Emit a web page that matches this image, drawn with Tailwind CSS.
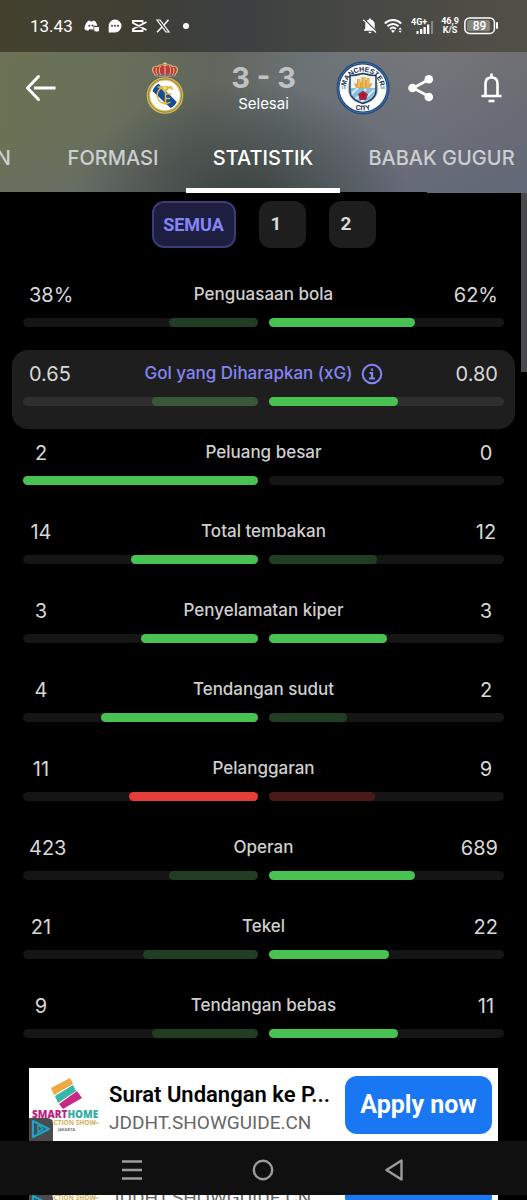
<!DOCTYPE html>
<html lang="id">
<head>
    <meta charset="UTF-8">
    <meta name="viewport" content="width=device-width, initial-scale=1.0">
    <title>Real Madrid 3 - 3 Manchester City - Statistik</title>
    <script src="https://cdn.jsdelivr.net/npm/@tailwindcss/browser@4"></script>
</head>
<body class="bg-black text-[#d8d8d8] font-['Inter',sans-serif] overflow-x-hidden">
    <header class="relative bg-[radial-gradient(ellipse_at_46%_104%,#3a423d_0%,#3a423d00_42%),linear-gradient(165deg,#62687800_45%,#626878_100%),linear-gradient(97deg,#6b7254_0%,#68705b_22%,#60665c_40%,#6c7376_58%,#76787b_80%,#737070_100%)]">
        <!-- Status bar -->
        <div class="flex justify-between items-center h-13 pl-[30px] pr-[28px] text-white bg-[linear-gradient(90deg,#44422e_0%,#3f3f34_25%,#3d4041_45%,#484944_70%,#515047_100%)]">
            <div class="flex items-center gap-[9px] font-['Roboto',sans-serif] text-[17px] leading-6">
                <span class="mr-[2px]">13.43</span>
                <svg class="w-[15px] h-[14px]" viewBox="0 0 15 14"><path fill="#fff" d="M4 2 6 1.500l.6 1h1.800L9 1.500l2 .5c1.300 1.500 2 3 2.300 4.800H9.500v4L5.500 10l-1.200 1.700C2.500 11.500 1.300 11 .5 10 .5 7 2 3.800 4 2Z"/><circle cx="5.300" cy="6.800" r="1" fill="#404034"/><circle cx="8.500" cy="6.500" r="1" fill="#404034"/><path fill="#fff" d="M10.300 8H15v4.200h-1.500l-1 1v-1h-2.200Z"/></svg>
                <svg class="w-[14px] h-[14px]" viewBox="0 0 14 14"><path fill="#fff" d="M7 .5A6.500 6.500 0 1 1 7 13.500H.7V7A6.400 6.400 0 0 1 7 .5Z"/><g fill="#404034"><circle cx="4" cy="6.800" r="1"/><circle cx="7" cy="6.800" r="1"/><circle cx="10" cy="6.800" r="1"/></g></svg>
                <svg class="w-[16px] h-[14px]" viewBox="0 0 16 14" fill="none" stroke="#fff" stroke-width="1.800"><path d="M15.500 3 2 10v2h9.500V10.300M11.500 3.700V2H2v2l13.500 7"/></svg>
                <svg class="w-[14px] h-[14px]" viewBox="0 0 14 14" fill="none" stroke="#fff"><path stroke-width="1.200" d="M1 1h3l9 12h-3Z"/><path stroke-width="1.400" d="M12.500.7 8 6M6 8l-5 5.300"/></svg>
                <span class="w-[6px] h-[6px] ml-[4px] rounded-full bg-white"></span>
            </div>
            <div class="flex items-center">
                <svg class="w-[14px] h-[16px]" viewBox="0 0 14 16"><path fill="#fff" d="M7 .5c.8 0 1.200.5 1.200 1.200C10.500 2.200 11.700 4 11.700 6.300V10.500L13 12v.8H1V12l1.300-1.500V6.300C2.300 4 3.500 2.200 5.800 1.700 5.800 1 6.200.5 7 .5ZM5.500 13.700h3a1.500 1.500 0 0 1-3 0Z"/><path stroke="#454643" stroke-width="1.300" d="M1.200 1.200 13.500 13.500"/><path stroke="#fff" stroke-width="1.200" d="M.3 1.800 13 14.500"/></svg>
                <svg class="w-[19px] h-[16px] ml-[7px]" viewBox="0 0 19 16" fill="none" stroke="#fff" stroke-width="1.900"><path d="M.8 5.500C5.500.9 12.500.9 17.200 5.500M3.500 8.300c3.200-3.100 7.800-3.100 11 0M6 11c1.800-1.700 4.200-1.700 6 0"/><path fill="#fff" stroke="none" d="m9 15-2-2.300c1.200-1 2.800-1 4 0ZM14.500 11.500 16.200 9.500l1.600 2ZM14.500 12.700l1.700 2 1.600-2Z"/></svg>
                <svg class="w-[24px] h-[18px] ml-[8px]" viewBox="0 0 24 18" fill="#fff"><text x="0" y="8" font-size="9" font-weight="700" font-family="Roboto, sans-serif">4G+</text><rect x="5.500" y="14" width="2" height="3"/><rect x="9" y="12" width="2.300" height="5"/><rect x="12.500" y="10" width="2.300" height="7"/><rect x="16" y="7.500" width="2.300" height="9.500"/><rect x="20" y="4" width="2" height="13" fill="#888882"/></svg>
                <div class="ml-[5px] w-[20px] font-['Roboto',sans-serif] font-bold text-center text-[9px] leading-[9px]"><div>46,9</div><div>K/S</div></div>
                <svg class="w-[35px] h-[18px] ml-[4px]" viewBox="0 0 35 18"><rect x=".9" y=".9" width="29.500" height="15.500" rx="4.500" fill="none" stroke="#fff" stroke-width="1.500"/><rect x="3" y="3" width="23" height="11.300" rx="2" fill="#85857e"/><path stroke="#fff" stroke-width="2" stroke-linecap="round" d="M33 6v5"/><text x="15.500" y="13" text-anchor="middle" fill="#fff" font-size="12" font-weight="500" font-family="Roboto, sans-serif">89</text></svg>
            </div>
        </div>

        <!-- Match bar -->
        <div class="grid grid-cols-[1fr_252px_1fr] items-center h-18">
            <button class="ml-[25px] w-8 h-8" aria-label="Kembali">
                <svg viewBox="0 0 32 32" fill="none" stroke="#fff" stroke-width="3"><path stroke-linejoin="round" stroke-linecap="round" d="M13.500 4.500 2.500 16l11 11.500"/><path d="M9 16h21.500"/></svg>
            </button>
            <div class="flex items-center">
                <svg class="w-[54px] h-[54px]" viewBox="0 0 54 54" role="img" aria-label="Real Madrid">
                    <path d="M15.500 11.500c-2.500-4 .5-7 4-6C21.500 3.500 25 3.500 27 4.500c2-1 5.500-1 7.500 1 3.500-1 6.500 2 4 6L36.500 15h-19Z" fill="#c03842" stroke="#d3b96a" stroke-width="1.200"/>
                    <path d="M27 1v14M22.500 5c-2 4-1 6 0 9M31.500 5c2 4 1 6 0 9M18.500 7c-1 3 0 5 1 7M35.500 7c1 3 0 5-1 7" fill="none" stroke="#e4c96b"/>
                    <path d="M25 2.500h4" stroke="#e4c96b"/>
                    <path d="M17 15.500c6-1.800 14-1.800 20 0" fill="none" stroke="#6c7a9b" stroke-width="1.500"/>
                    <circle cx="27" cy="34.500" r="16.600" fill="#fff" stroke="#d9ba4a" stroke-width="3.400"/>
                    <circle cx="27" cy="34.500" r="16.600" fill="none" stroke="#7e8463" stroke-width="1"/>
                    <path d="M14.500 30c1-3 3.500-6 6-7.300L38.800 41c-1.500 3-3.500 5-6.300 6Z" fill="#154b9b"/>
                    <path d="M19.500 26h4.500l3 3.500L30 26h4.500M35 28.500C31 24.500 22 24 19.500 32c-1.500 6 3 10.500 7.500 10.500 2 0 4-.5 5.500-1.500M27.500 31v13M27.500 33h6M27.500 37.500h4.500M22 25.500l5 5.500 5-5.500" fill="none" stroke="#dfbd42" stroke-width="1.500"/>
                </svg>
                <div class="w-36 text-center">
                    <div class="text-[29px] leading-8 font-bold text-[#bfc1c2]">3 - 3</div>
                    <div class="text-[15px] leading-5 text-white">Selesai</div>
                </div>
                <svg class="w-[54px] h-[54px]" viewBox="0 0 54 54" role="img" aria-label="Manchester City">
                    <defs>
                        <path id="cityTop" d="M9.500 28a17.500 17.500 0 0 1 35 0"/>
                        <path id="cityBottom" d="M4.500 27a22.500 22.500 0 0 0 45 0"/>
                        <clipPath id="cityShield"><path d="M14 14.500c5 .5 9-1 13-2 4 1 8 2.500 13 2V30c0 6.500-6.500 10.500-13 12.500C20.500 40.500 14 36.500 14 30Z"/></clipPath>
                    </defs>
                    <circle cx="27" cy="27" r="26.500" fill="#1f467c"/>
                    <circle cx="27" cy="27" r="23.500" fill="#fff"/>
                    <circle cx="27" cy="27" r="25" fill="none" stroke="#4f7db0" stroke-width=".8"/>
                    <circle cx="27" cy="27" r="15.500" fill="#b7c6cf"/>
                    <g clip-path="url(#cityShield)">
                        <path fill="#eef3f3" d="M12 10h30v17H12z"/>
                        <path fill="#87bedf" d="M12 27h30v17H12z"/>
                        <path stroke="#d9ebf4" stroke-width="2" d="m13 35 9-8M17 41l13-13M23 43l15-14M32 42l8-7"/>
                    </g>
                    <path d="M14 14.500c5 .5 9-1 13-2 4 1 8 2.500 13 2V30c0 6.500-6.500 10.500-13 12.500C20.500 40.500 14 36.500 14 30Z" fill="none" stroke="#223d5c" stroke-width="1.500"/>
                    <path fill="#e1a945" d="M18 22.500h3V18h3.500v3h1v-5h4v3h1v-2h3v5.500h3L34 27H20Z"/>
                    <path stroke="#f4d796" stroke-width=".8" d="M23 17v9M28 16v10M32 18v8"/>
                    <path fill="#b51f35" stroke="#71243a" stroke-width=".7" d="m27 30 4.500 3.200-1.600 5.300h-5.800l-1.600-5.300Z"/>
                    <circle cx="27" cy="34.500" r="1.300" fill="#7d1930"/>
                    <g fill="#14264a" font-family="Liberation Sans, sans-serif" font-weight="700" text-anchor="middle">
                        <text font-size="7"><textPath href="#cityTop" startOffset="50%">MANCHESTER</textPath></text>
                        <text font-size="7"><textPath href="#cityBottom" startOffset="50%">CITY</textPath></text>
                        <text x="7.500" y="28" font-size="4" fill="#6c8fb5">18</text>
                        <text x="46.500" y="28" font-size="4" fill="#6c8fb5">94</text>
                    </g>
                </svg>
            </div>
            <div class="flex justify-between items-center pl-[16px] pr-[20px]">
                <button class="w-8 h-8" aria-label="Bagikan">
                    <svg viewBox="0 0 32 32" fill="#fff"><path d="M24 7 7 16l17 9" fill="none" stroke="#fff" stroke-width="2.600"/><circle cx="6.500" cy="16" r="4.300"/><circle cx="22.800" cy="7.200" r="4.300"/><circle cx="22.800" cy="25" r="4.300"/></svg>
                </button>
                <button class="w-8 h-8" aria-label="Notifikasi">
                    <svg viewBox="0 0 32 32" fill="none" stroke="#fff" stroke-width="2.600"><path d="M10.500 24V11.500c0-4 2.500-6 6-6s6 2 6 6V24M6.500 24h20M16.500 1.500v4"/><path d="M13.500 29h6"/></svg>
                </button>
            </div>
        </div>

        <nav class="relative flex h-[69px] overflow-hidden whitespace-nowrap text-[20px] leading-[69px] font-medium text-center text-[#cccfd2]">
            <a class="shrink-0 w-10 pr-[29px] flex justify-end" href="#susunan">SUSUNAN</a>
            <a class="shrink-0 w-[146px]" href="#formasi">FORMASI</a>
            <a class="relative z-10 shrink-0 w-[154px] border-b-5 border-white text-white" href="#statistik">STATISTIK</a>
            <a class="shrink-0 w-[203px]" href="#babak-gugur">BABAK GUGUR</a>
            <div class="absolute left-0 bottom-0 h-px w-[81%] bg-black"></div>
        </nav>
    </header>

    <main class="relative" id="statistik">
        <div class="flex justify-center gap-[23px] pt-2 pb-[23px] font-['Roboto',sans-serif] text-[19px] font-bold">
            <button class="h-[47px] w-[84px] rounded-xl border-2 border-[#3b3b78] bg-[#1e1e40] text-center text-[18px] text-[#8585fa]">SEMUA</button>
            <button class="h-[47px] w-[47px] pl-3 rounded-xl bg-[#1e1e1e] text-left">1</button>
            <button class="h-[47px] w-[47px] pl-3 rounded-xl bg-[#1e1e1e] text-left">2</button>
        </div>

        <div id="statList" class="mx-3"></div>

        <!-- Scroll indicator -->
        <div class="absolute right-0 top-0 w-[6px] h-[179px] bg-[#48484d]"></div>
    </main>

    <section id="ad" class="mt-[7px] mx-[29px] h-[73px] flex items-center bg-white font-['Roboto',sans-serif]">
        <div class="shrink-0 w-[74px] h-full mr-[6px]">
            <svg class="w-full h-full" viewBox="0 0 74 73">
                <path fill="#edaa42" d="m22 20 19-10 3 6-19 11Z"/>
                <path fill="#36b7a8" d="m26 28 18-11 3 6-18 12Z"/>
                <path fill="#c72a86" d="m30 36 18-13 5 7-19 11Z"/>
                <g font-family="Open Sans, sans-serif" font-weight="700">
                    <text x="3" y="50" font-size="10" font-weight="800">
                        <tspan fill="#bd2283">SMART</tspan><tspan fill="#36ad9f">HOME</tspan>
                    </text>
                    <text x="10" y="57" font-size="6.500" fill="#d3b15c">SELECTION SHOW</text>
                    <text x="29" y="63" font-size="4" fill="#777">JAKARTA</text>
                </g>
                <path stroke="#d3b15c" d="M64 55h6"/>
                <path fill="#4b4b4d" d="M0 50h18q6 0 6 6v17H0Z"/>
                <path d="M4 53v16l16-8Z" fill="none" stroke="#19a7c9" stroke-width="2" stroke-linejoin="round"/>
                <path d="M9 57v9M9 57l5 4-5 3" fill="none" stroke="#19a7c9" stroke-width="1.500"/>
            </svg>
        </div>
        <div class="grow min-w-0 pt-2 whitespace-nowrap">
            <div class="text-[22px] leading-7 font-semibold text-black">Surat Undangan ke P...</div>
            <div class="text-[19px] leading-7 text-[#666]">JDDHT.SHOWGUIDE.CN</div>
        </div>
        <button class="shrink-0 w-[147px] h-[58px] mr-[6px] rounded-xl bg-[#1977f3] text-[25px] font-bold text-white">Apply now</button>
    </section>

    <!-- System navigation -->
    <footer class="h-[54px] bg-[#101010] flex justify-center items-center gap-[107px] pt-1 pr-[2px]">
        <button class="w-6 h-6" aria-label="Menu"><svg viewBox="0 0 24 24" stroke="#9c9c9c" stroke-width="2.600"><path d="M2 3.500h20M2 12h20M2 20.500h20"/></svg></button>
        <button class="w-6 h-6" aria-label="Beranda"><svg viewBox="0 0 24 24" fill="none" stroke="#9c9c9c" stroke-width="2.400"><circle cx="12" cy="12" r="9.200"/></svg></button>
        <button class="w-6 h-6" aria-label="Kembali ke sebelumnya"><svg viewBox="0 0 24 24" fill="none" stroke="#9c9c9c" stroke-width="2.400" stroke-linejoin="round"><path d="M19.500 2.500v19L4.500 12Z"/></svg></button>
    </footer>

    <div id="nextAd" class="h-[5px] overflow-hidden"></div>

    <script>
        const stats = [
            { label: 'Penguasaan bola', home: '38%', away: '62%', split: 38 },
            { label: 'Gol yang Diharapkan (xG)', home: '0.65', away: '0.80', split: 45, info: true },
            { label: 'Peluang besar', home: '2', away: '0', split: 100 },
            { label: 'Total tembakan', home: '14', away: '12', split: 54 },
            { label: 'Penyelamatan kiper', home: '3', away: '3', split: 50 },
            { label: 'Tendangan sudut', home: '4', away: '2', split: 67 },
            { label: 'Pelanggaran', home: '11', away: '9', split: 55, negative: true },
            { label: 'Operan', home: '423', away: '689', split: 38 },
            { label: 'Tekel', home: '21', away: '22', split: 49 },
            { label: 'Tendangan bebas', home: '9', away: '11', split: 45 }
        ];

        const infoIcon = `<svg class="w-[22px] h-[22px]" viewBox="0 0 22 22" fill="none" stroke="#8585f5" stroke-width="2"><circle cx="11" cy="11" r="9.300"/><path stroke-width="2.200" d="M11 5.500v2.200M8.500 10H11v5.500M8 15.500h6"/></svg>`;

        // Brighter colour for the leading side, dimmed for the other one
        function barColor(stat, leading) {
            if (stat.negative) return leading ? 'bg-[#e53d38]' : 'bg-[#4a1a18]';
            if (stat.info) return leading ? 'bg-[#48c353]' : 'bg-[#385837]';
            return leading ? 'bg-[#48c353]' : 'bg-[#213d22]';
        }

        function renderStat(stat) {
            const track = stat.info ? 'bg-[#2f2f2f]' : 'bg-[#151515]';
            return `
                <div class="h-[79px] px-[11px] pt-[9px] rounded-2xl ${stat.info ? 'bg-[#1e1e1e]' : ''}">
                    <div class="grid grid-cols-[1fr_auto_1fr] items-center h-6 px-[6px]">
                        <span class="justify-self-start min-w-6 text-center text-[20px]">${stat.home}</span>
                        <span class="flex items-center gap-2 text-[17px] font-medium ${stat.info ? 'text-[#8585f5]' : 'text-[#cfcfcf]'}">${stat.label}${stat.info ? infoIcon : ''}</span>
                        <span class="justify-self-end min-w-6 text-center text-[20px]">${stat.away}</span>
                    </div>
                    <div class="grid grid-cols-2 gap-[11px] mt-[14px]">
                        <div class="flex justify-end h-[9px] rounded-full ${track}">
                            <div class="rounded-full ${barColor(stat, stat.split >= 50)}" style="width: ${stat.split}%"></div>
                        </div>
                        <div class="flex h-[9px] rounded-full ${track}">
                            <div class="rounded-full ${barColor(stat, stat.split <= 50)}" style="width: ${100 - stat.split}%"></div>
                        </div>
                    </div>
                </div>
            `;
        }

        document.getElementById('statList').innerHTML = stats.map(renderStat).join('');

        // The next banner peeks out under the system navigation
        const nextAd = document.getElementById('ad').cloneNode(true);
        nextAd.removeAttribute('id');
        nextAd.classList.replace('mt-[7px]', '-mt-[52px]');
        document.getElementById('nextAd').appendChild(nextAd);
    </script>
</body>
</html>
